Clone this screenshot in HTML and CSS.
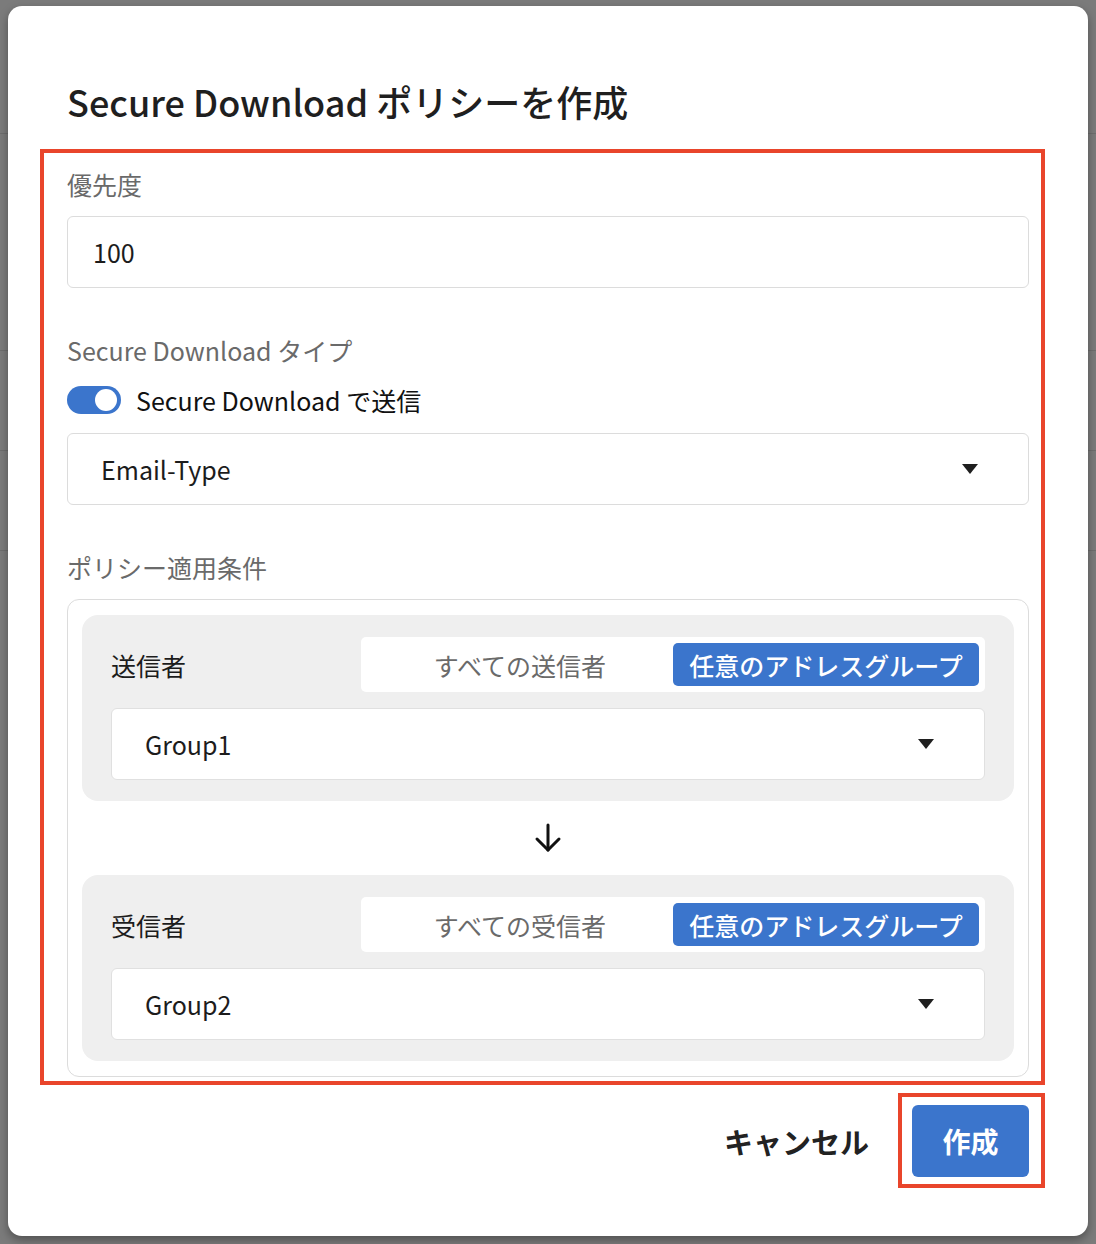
FILE: index.html
```html
<!DOCTYPE html>
<html lang="ja">
<head>
<meta charset="utf-8">
<title>Secure Download ポリシーを作成</title>
<link rel="stylesheet" href="styles.css">
</head>
<body>
<div class="backdrop">
  <div class="modal">
    <h1 class="title">Secure Download ポリシーを作成</h1>

    <div class="field">
      <div class="label">優先度</div>
      <div class="input">100</div>
    </div>

    <div class="field">
      <div class="label">Secure Download タイプ</div>
      <div class="toggle-row">
        <span class="toggle"><span class="knob"></span></span>
        <span class="toggle-text">Secure Download で送信</span>
      </div>
      <div class="select">
        <span>Email-Type</span>
        <span class="caret"></span>
      </div>
    </div>

    <div class="field">
      <div class="label">ポリシー適用条件</div>
      <div class="conditions">
        <div class="card">
          <div class="card-head">
            <div class="card-label">送信者</div>
            <div class="segment">
              <div class="seg-opt">すべての送信者</div>
              <div class="seg-opt active">任意のアドレスグループ</div>
            </div>
          </div>
          <div class="select">
            <span>Group1</span>
            <span class="caret"></span>
          </div>
        </div>

        <div class="arrow">
          <svg width="28" height="30" viewBox="0 0 28 30" fill="none" stroke="#111" stroke-width="3" stroke-linecap="round" stroke-linejoin="round">
            <path d="M14 2 V27"/>
            <path d="M3 16 L14 27 L25 16"/>
          </svg>
        </div>

        <div class="card">
          <div class="card-head">
            <div class="card-label">受信者</div>
            <div class="segment">
              <div class="seg-opt">すべての受信者</div>
              <div class="seg-opt active">任意のアドレスグループ</div>
            </div>
          </div>
          <div class="select">
            <span>Group2</span>
            <span class="caret"></span>
          </div>
        </div>
      </div>
    </div>

    <div class="footer">
      <button class="btn-cancel">キャンセル</button>
      <button class="btn-primary">作成</button>
    </div>

    <div class="mark mark-form"></div>
    <div class="mark mark-btn"></div>
  </div>
</div>
</body>
</html>
```

FILE: styles.css
```css
* { box-sizing: border-box; }

html, body {
  margin: 0;
  padding: 0;
}

body {
  width: 1096px;
  height: 1244px;
  overflow: hidden;
  background: #7b7b7b;
  font-family: "Noto Sans CJK JP", "Noto Sans", sans-serif;
  color: #1c1c1c;
}

.backdrop {
  padding: 6px 8px;
  height: 1244px;
  background:
    linear-gradient(#6e6e6e, #6e6e6e) 0 133px / 100% 1px no-repeat,
    linear-gradient(#6e6e6e, #6e6e6e) 0 350px / 100% 1px no-repeat,
    linear-gradient(#6e6e6e, #6e6e6e) 0 450px / 100% 1px no-repeat,
    linear-gradient(#6e6e6e, #6e6e6e) 0 550px / 100% 1px no-repeat,
    #7b7b7b;
}

.modal {
  position: relative;
  width: 1080px;
  height: 1230px;
  background: #fff;
  border-radius: 14px;
  box-shadow: 0 4px 10px rgba(0, 0, 0, 0.35);
  padding: 71px 59px 0 59px;
}

.title {
  margin: 0 0 43px 0;
  font-size: 36px;
  line-height: 48px;
  font-weight: 500;
  color: #1f1f1f;
}

.field {
  display: flex;
  flex-direction: column;
  margin-bottom: 46px;
}

.label {
  font-size: 25px;
  line-height: 32px;
  color: #6a6a6a;
  margin-bottom: 16px;
}

.input,
.select {
  height: 72px;
  border: 1px solid #dcdcdc;
  border-radius: 6px;
  background: #fff;
  font-size: 25px;
  color: #1c1c1c;
  display: flex;
  align-items: center;
}

.input {
  padding-left: 25px;
}

.select {
  justify-content: space-between;
  padding: 0 50px 0 33px;
}

.caret {
  width: 0;
  height: 0;
  border-left: 8px solid transparent;
  border-right: 8px solid transparent;
  border-top: 10px solid #1f1f1f;
}

.toggle-row {
  display: flex;
  align-items: center;
  gap: 15px;
  height: 32px;
  margin: 2px 0 17px 0;
}

.toggle {
  width: 54px;
  height: 28px;
  border-radius: 14px;
  background: #3b75cc;
  display: flex;
  align-items: center;
  justify-content: flex-end;
  padding-right: 4px;
}

.knob {
  width: 22px;
  height: 22px;
  border-radius: 50%;
  background: #fff;
}

.toggle-text {
  font-size: 25px;
  color: #111;
}

.conditions {
  border: 1px solid #dcdcdc;
  border-radius: 12px;
  padding: 15px 14px 15px 14px;
}

.card {
  background: #efefef;
  border-radius: 16px;
  padding: 22px 29px 21px 29px;
}

.card-head {
  display: grid;
  grid-template-columns: 250px 1fr;
  align-items: center;
  margin-bottom: 16px;
}

.card-label {
  font-size: 25px;
  color: #1c1c1c;
}

.segment {
  background: #fff;
  border-radius: 5px;
  padding: 6px;
  display: grid;
  grid-template-columns: 1fr 1fr;
  height: 55px;
}

.seg-opt {
  display: flex;
  align-items: center;
  justify-content: center;
  font-size: 25px;
  color: #6a6a6a;
  border-radius: 5px;
}

.seg-opt.active {
  background: #3b75cc;
  color: #fff;
  font-weight: 500;
}

.card .select {
  border-color: #e0e0e0;
}

.arrow {
  height: 74px;
  display: flex;
  align-items: center;
  justify-content: center;
}

.footer {
  display: flex;
  justify-content: flex-end;
  align-items: center;
  gap: 43px;
  margin-top: -18px;
}

.btn-cancel {
  background: none;
  border: none;
  padding: 0;
  font-family: inherit;
  font-size: 29px;
  font-weight: 700;
  color: #222;
}

.btn-primary {
  width: 117px;
  height: 72px;
  border: none;
  border-radius: 6px;
  background: #3b75cc;
  color: #fff;
  font-family: inherit;
  font-size: 28px;
  font-weight: 700;
}

.mark {
  position: absolute;
  border: 4px solid #e9452b;
  pointer-events: none;
}

.mark-form {
  left: 32px;
  top: 143px;
  width: 1005px;
  height: 936px;
}

.mark-btn {
  left: 890px;
  top: 1087px;
  width: 147px;
  height: 95px;
}
```
